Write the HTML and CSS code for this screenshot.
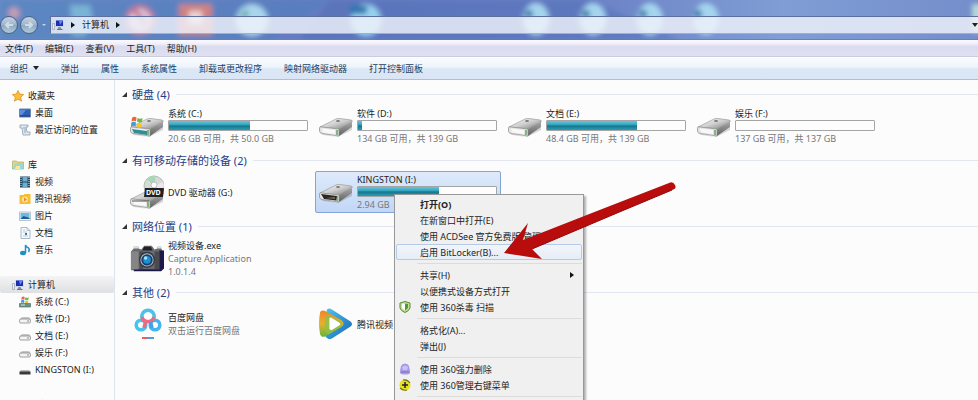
FILE: index.html
```html
<!DOCTYPE html>
<html lang="zh-CN">
<head>
  <meta charset="UTF-8">
  <title>计算机</title>
  <link rel="stylesheet" href="styles.css">
</head>
<body>
  <!-- shared icons -->
  <svg class="defs" width="0" height="0" aria-hidden="true">
    <defs>
      <linearGradient id="metal" x1="0" y1="0" x2="1" y2="1">
        <stop offset="0" stop-color="#fafafa"/><stop offset="0.5" stop-color="#cfcfcf"/><stop offset="1" stop-color="#777"/>
      </linearGradient>
      <linearGradient id="side" x1="0" y1="0" x2="0" y2="1">
        <stop offset="0" stop-color="#aaa"/><stop offset="1" stop-color="#5e605e"/>
      </linearGradient>
      <linearGradient id="blue" x1="0" y1="0" x2="1" y2="1">
        <stop offset="0" stop-color="#4bc6ee"/><stop offset="1" stop-color="#1763b4"/>
      </linearGradient>
      <linearGradient id="warm" x1="0" y1="0" x2="0" y2="1">
        <stop offset="0" stop-color="#ef842a"/><stop offset="0.5" stop-color="#e7b12e"/><stop offset="1" stop-color="#5fb63c"/>
      </linearGradient>
      <symbol id="drive" viewBox="0 0 34 19">
        <path d="M1 15 17 18.500 33 9v3L19 19 4 17z" fill="#000" opacity=".15"/>
        <path d="M1 9 17 1q2-1 4-.5l11 1.500q2 .5 1 2L20 11z" fill="url(#metal)" stroke="#909090" stroke-width=".6"/>
        <path d="M20 11 33 3.500v5.500L20 18z" fill="url(#side)"/>
        <path d="M1 8.800 20 11v7L3 15.500Q.5 15 .5 13V10z" fill="#e4e5e3" stroke="#8a8a8a" stroke-width=".7"/>
        <path d="M3 10.500 16 12v4L4 14.500z" fill="#f8f8f8"/>
        <path d="M18 12v5" stroke="#479043" stroke-width="1.200"/>
        <ellipse cx="19" cy="3" rx="2" ry=".8" fill="#555"/>
      </symbol>
      <symbol id="mini-drive" viewBox="0 0 12 12">
        <path d="M1 6Q2 4 4 4h5q2 0 2.500 2v3H.5z" fill="#c4c5c6"/>
        <rect x=".6" y="6" width="10.800" height="4" rx="1.200" fill="#f3f3f3" stroke="#888" stroke-width=".8"/>
        <path d="M8 8h2" stroke="#8b8b8b"/>
      </symbol>
      <symbol id="windows" viewBox="0 0 12 12">
        <path d="M1 2Q3 0 5.500 1.500L5 5.500Q3 4 .5 5.500z" fill="#e7693a"/>
        <path d="M6.500 2Q9 3.500 11.500 2L11 6Q8.500 7 6 5.500z" fill="#71b744"/>
        <path d="M.3 6.500Q3 5 5 6.500l-.5 4Q2 9 0 10.500z" fill="#429bdc"/>
        <path d="M6 7Q8.500 8 11 7l-.5 4Q8 12 5.500 11z" fill="#f5c52e"/>
      </symbol>
      <symbol id="computer" viewBox="0 0 12 12">
        <rect x="3.500" y="1" width="8" height="7" fill="#c8d4ec"/>
        <path d="M4 1.500h7v5.500H4z" fill="#1a2fae"/>
        <path d="M7 1.500h4L8 6z" fill="#6a88ef"/>
        <path d="M6.500 8h2l1 2h-4z" fill="#858da0"/>
        <path d="M5 10.500h5.500" stroke="#69758b"/>
        <path d="M.5 4.500h2v6h-2z" fill="#e9edf3" stroke="#99a3b5" stroke-width=".7"/>
      </symbol>
    </defs>
  </svg>

  <header class="glass">
    <svg class="wallpaper" width="978" height="40" aria-hidden="true">
      <defs>
        <filter id="soft"><feGaussianBlur stdDeviation="2.500"/></filter>
      </defs>
      <g filter="url(#soft)">
        <path d="M0 0h330l-60 40H0z" fill="#4c80bd" opacity=".45"/>
        <path d="M330 0h260l90 40H300z" fill="#4867b5" opacity=".4"/>
        <circle cx="14" cy="13" r="6" fill="#c59bb4"/>
        <path d="M70 5h20l4 18-10 13H72z" fill="#79b3d6"/>
        <circle cx="140" cy="20" r="13" fill="#d9c3d8" stroke="#c4779a" stroke-width="4"/>
        <path d="m134 10 12 14" stroke="#c4667f" stroke-width="4"/>
        <path d="M179 4h33v31h-33z" fill="#cf8283"/>
        <path d="M189 11h13v13h-13z" fill="#ead3d2"/>
        <ellipse cx="252" cy="20" rx="16" ry="16" fill="#a8d5ec"/>
        <path d="m238 16 10-7v8z" fill="#5ba3a2"/>
        <ellipse cx="366" cy="20" rx="15" ry="16" fill="#95d2ee"/>
        <path d="M350 6h18l-2 8h-16z" fill="#2e77af"/>
        <g fill="#a4d4ee">
          <ellipse cx="536" cy="19" rx="13" ry="16"/>
          <ellipse cx="593" cy="19" rx="13" ry="16"/>
          <ellipse cx="650" cy="19" rx="13" ry="16"/>
          <ellipse cx="706" cy="19" rx="13" ry="16"/>
        </g>
        <g fill="#397aa9">
          <circle cx="529" cy="14" r="4"/>
          <circle cx="586" cy="14" r="4"/>
          <circle cx="643" cy="14" r="4"/>
          <circle cx="698" cy="14" r="4"/>
        </g>
        <path d="M972 4h10v28h-10z" fill="#b5dad9"/>
      </g>
    </svg>
    <button class="nav-btn" aria-label="后退"><svg width="10" height="10" viewBox="0 0 10 10"><path d="M9 5H2m3-3L2 5l3 3" fill="none" stroke="#d0dcea" stroke-width="2"/></svg></button>
    <button class="nav-btn" aria-label="前进"><svg width="10" height="10" viewBox="0 0 10 10"><path d="M1 5h7M5 2l3 3-3 3" fill="none" stroke="#d0dcea" stroke-width="2"/></svg></button>
    <span class="nav-more"></span>
    <div class="address">
      <svg width="12" height="12"><use href="#computer"/></svg>
      <span class="tri-right"></span>
      <button class="crumb">计算机</button>
      <span class="tri-right"></span>
      <button class="address-drop" aria-label="历史"><span class="tri-down"></span></button>
    </div>
  </header>

  <nav class="menubar">
    <button>文件(F)</button>
    <button>编辑(E)</button>
    <button>查看(V)</button>
    <button>工具(T)</button>
    <button>帮助(H)</button>
  </nav>

  <div class="toolbar">
    <button>组织<span class="tri-down"></span></button>
    <button>弹出</button>
    <button>属性</button>
    <button>系统属性</button>
    <button>卸载或更改程序</button>
    <button>映射网络驱动器</button>
    <button>打开控制面板</button>
  </div>

  <div class="main">
    <aside class="sidebar">
      <div class="tree">
        <a href="#" class="root"><svg width="12" height="12" viewBox="0 0 12 12"><path d="m6 .5 1.700 3.600 4 .4-3 2.700.9 4L6 9.200l-3.600 2 .9-4-3-2.700 4-.4z" fill="#fbbd3a" stroke="#d98b1c" stroke-width=".7"/></svg>收藏夹</a>
        <a href="#"><svg width="12" height="12" viewBox="0 0 12 12"><path d="M.5 2h11v8H.5z" fill="#2c5fb5" stroke="#6d86ae"/><path d="M1 3h6L3 8H1z" fill="#598cdb"/><path d="M1 9h10" stroke="#163974"/></svg>桌面</a>
        <a href="#"><svg width="12" height="12" viewBox="0 0 12 12"><path d="M1 1h8v2H7l1 5h3v3H4L3 4H1z" fill="#dfe8ef" stroke="#8b9eae" stroke-width=".8"/><path d="M4 4h3M5 6h2M5 8h2" stroke="#86a9c5"/></svg>最近访问的位置</a>
      </div>
      <div class="tree">
        <a href="#" class="root"><svg width="12" height="12" viewBox="0 0 12 12"><path d="M.5 2h4l1 1h6v7H.5z" fill="#e7d77c" stroke="#a9aa68" stroke-width=".7"/><path d="M3 4h8v6H1z" fill="#9dd6d4"/><path d="M4 7h4v3H3z" fill="#f8e795"/></svg>库</a>
        <a href="#"><svg width="12" height="12" viewBox="0 0 12 12"><path d="M1 .5h10v11H1z" fill="#24475c"/><path d="M3.500 1h5v4.500h-5zM3.500 6.500h5V11h-5z" fill="#6caed0"/><path d="M2 1v10M10 1v10" stroke="#d9e8ee" stroke-dasharray="1 1"/></svg>视频</a>
        <a href="#"><svg width="12" height="12" viewBox="0 0 12 12"><path d="M.5 2h4l1-1h6v10H.5z" fill="#f8bc30"/><circle cx="6" cy="6.500" r="3" fill="#ffe19b"/><path d="m5 4.500 3 2-3 2z" fill="#ef8e23"/></svg>腾讯视频</a>
        <a href="#"><svg width="12" height="12" viewBox="0 0 12 12"><path d="M.5 2h11v8.500H.5z" fill="#f0f6f9" stroke="#a7b7c0" stroke-width=".8"/><path d="M1.500 3h9v6h-9z" fill="#6bbbe4"/><path d="m1.500 9 3-3 6 2v1z" fill="#205c90"/></svg>图片</a>
        <a href="#"><svg width="12" height="12" viewBox="0 0 12 12"><path d="M2 .5h6l3 3v8H2z" fill="#f5f9fb" stroke="#93a9b8" stroke-width=".8"/><path d="M8 .5v3h3M4 3h2M4 5h4M4 9h5" stroke="#9db3c2" fill="none" stroke-width=".7"/><path d="M6 6h2v2H6z" fill="#3274ae"/></svg>文档</a>
        <a href="#"><svg width="12" height="12" viewBox="0 0 12 12"><ellipse cx="4" cy="9" rx="3" ry="2.200" fill="#218fc6"/><path d="M6.500 9V1q.5 2 3 3 1.500 1.500 0 4" fill="none" stroke="#218fc6" stroke-width="1.500"/></svg>音乐</a>
      </div>
      <div class="tree">
        <a href="#" class="root current"><svg width="12" height="12"><use href="#computer"/></svg>计算机</a>
        <a href="#"><svg width="12" height="12" viewBox="0 0 12 12"><use href="#windows" x="2" width="8" height="8"/><path d="M.5 7.500h11V11H.5z" fill="#6b9288" stroke="#587368" stroke-width=".7"/><path d="M2 9h4" stroke="#cfe3e5"/></svg>系统 (C:)</a>
        <a href="#"><svg width="12" height="12"><use href="#mini-drive"/></svg>软件 (D:)</a>
        <a href="#"><svg width="12" height="12"><use href="#mini-drive"/></svg>文档 (E:)</a>
        <a href="#"><svg width="12" height="12"><use href="#mini-drive"/></svg>娱乐 (F:)</a>
        <a href="#"><svg width="12" height="12" viewBox="0 0 12 12"><path d="M2 6h8l1.500 2H.5z" fill="#b7b7b7"/><path d="M.5 7.500h11v3H.5z" fill="#393939"/></svg>KINGSTON (I:)</a>
      </div>
      <div class="tree">
        <a href="#" class="root"><svg width="12" height="12" viewBox="0 0 12 12"><circle cx="6" cy="6" r="5" fill="#51b1d7"/><path d="M2 4q4-3 8 0M4 2l2 4" stroke="#d4f1f7" fill="none"/></svg>网络</a>
      </div>
    </aside>

    <main class="content">
      <section class="group">
        <h2><span class="collapse"></span>硬盘 (4)</h2>
        <div class="tiles">
          <div class="tile">
            <svg width="34" height="26" viewBox="0 0 34 26"><use href="#drive" y="5" width="34" height="19"/><path d="m2 16 15 2v4L4 20z" fill="#2f8f96"/><use href="#windows" x="1" y="3" width="12" height="12"/></svg>
            <div class="info">
              <span class="name">系统 (C:)</span>
              <div class="bar"><div class="fill" style="width: 59%"></div></div>
              <span class="sub">20.6 GB 可用，共 50.0 GB</span>
            </div>
          </div>
          <div class="tile">
            <svg width="34" height="26" viewBox="0 0 34 26"><use href="#drive" y="5" width="34" height="19"/></svg>
            <div class="info">
              <span class="name">软件 (D:)</span>
              <div class="bar"><div class="fill" style="width: 3%"></div></div>
              <span class="sub">134 GB 可用，共 139 GB</span>
            </div>
          </div>
          <div class="tile">
            <svg width="34" height="26" viewBox="0 0 34 26"><use href="#drive" y="5" width="34" height="19"/></svg>
            <div class="info">
              <span class="name">文档 (E:)</span>
              <div class="bar"><div class="fill" style="width: 65%"></div></div>
              <span class="sub">48.4 GB 可用，共 139 GB</span>
            </div>
          </div>
          <div class="tile">
            <svg width="34" height="26" viewBox="0 0 34 26"><use href="#drive" y="5" width="34" height="19"/></svg>
            <div class="info">
              <span class="name">娱乐 (F:)</span>
              <div class="bar"><div class="fill" style="width: 0%"></div></div>
              <span class="sub">137 GB 可用，共 137 GB</span>
            </div>
          </div>
        </div>
      </section>

      <section class="group">
        <h2><span class="collapse"></span>有可移动存储的设备 (2)</h2>
        <div class="tiles">
          <div class="tile">
            <svg width="34" height="36" viewBox="0 0 34 36">
              <circle cx="24" cy="12" r="10" fill="#d4ddd5" stroke="#a9aaa9" stroke-width=".8"/>
              <path d="M24 12 17 5q4-4 9-3z" fill="#a9d8b6"/><path d="m24 12 9-4q2 5-1 9z" fill="#eee7f2"/>
              <circle cx="24" cy="11" r="3" fill="#fff" stroke="#aaa" stroke-width=".7"/>
              <use href="#drive" y="16" width="34" height="19"/>
              <path d="M2 27h17" stroke="#555"/>
              <path d="M15 14h18q1 0 1 1l-1 8H14z" fill="#222"/>
              <text class="disc-label" x="16" y="21">DVD</text>
            </svg>
            <div class="info"><span class="name">DVD 驱动器 (G:)</span></div>
          </div>
          <div class="tile selected">
            <svg width="34" height="26" viewBox="0 0 34 26"><use href="#drive" y="5" width="34" height="19"/><path d="m2 15 16 2-1 4.500L5 20z" fill="#292522"/><path d="m6 19 10-1v2z" fill="#75695c"/></svg>
            <div class="info">
              <span class="name">KINGSTON (I:)</span>
              <div class="bar"><div class="fill" style="width: 59%"></div></div>
              <span class="sub">2.94 GB</span>
            </div>
          </div>
        </div>
      </section>

      <section class="group">
        <h2><span class="collapse"></span>网络位置 (1)</h2>
        <div class="tiles">
          <div class="tile">
            <svg width="34" height="28" viewBox="0 0 36 28">
              <path d="M1 7 4 4V2h5v2l3 1 3-4h8l3 4 3-1V2h4v2l2 3v18l-2 2H1z" fill="#686b70"/>
              <path d="M31 6h5v19l-3 3H4v-2h27z" fill="#1e1848"/>
              <path d="M1 7h8v19H1z" fill="#858585"/><path d="M10 7h4v19h-4zM26 7h5v19h-5z" fill="#4a4b50"/>
              <path d="M15 2h7l2 4H13z" fill="#202126"/><path d="M4 3h5M29 3h4" stroke="#ddd" stroke-width="2"/>
              <circle cx="18" cy="16" r="8.500" fill="#34363c"/><circle cx="18" cy="16" r="7" fill="#b7bdc6"/>
              <circle cx="18" cy="16" r="6" fill="#173f71"/><circle cx="18" cy="16" r="4" fill="#1b91d3"/>
              <circle cx="16.500" cy="14" r="1.800" fill="#a6e5f5"/>
            </svg>
            <div class="info">
              <span class="name">视频设备.exe</span>
              <span class="sub">Capture Application</span>
              <span class="sub">1.0.1.4</span>
            </div>
          </div>
        </div>
      </section>

      <section class="group">
        <h2><span class="collapse"></span>其他 (2)</h2>
        <div class="tiles">
          <div class="tile">
            <svg width="34" height="32" viewBox="0 0 34 32">
              <g fill="none" stroke-width="3.500">
                <path d="M12 10a6.200 6.200 0 1 1 12 0" stroke="#4ec0ec"/>
                <circle cx="11" cy="17" r="4.800" stroke="#46c3ee"/>
                <circle cx="25" cy="17" r="4.800" stroke="#46b4ee"/>
                <path d="M12 9a6.200 6.200 0 0 0 12 0" stroke="#ee6a80"/>
                <path d="m15.500 14-1.500 6" stroke="#ee6a80"/>
                <path d="m20.500 14 1.500 6" stroke="#46a0e4"/>
              </g>
              <path d="M12 30h6" stroke="#ee5b63" stroke-width="2"/><path d="M18 30h6" stroke="#4a9edc" stroke-width="2"/>
            </svg>
            <div class="info">
              <span class="name">百度网盘</span>
              <span class="sub">双击运行百度网盘</span>
            </div>
          </div>
          <div class="tile">
            <svg width="34" height="34" viewBox="0 0 36 34">
              <path d="M8 3Q9-1 14 2l19 12q4 3 0 6L14 32q-5 3-7-2z" fill="url(#blue)"/>
              <path d="M1 6q0-4 5-3l18 10q4 4 0 7L7 30q-5 2-6-3Q-1 16 1 6z" fill="url(#warm)"/>
              <path d="M7 9q1-3 4-1l13 7q2 2 0 4l-13 8q-3 1-4-2Q5 17 7 9z" fill="#8fc04a" opacity=".8"/>
              <path d="M11 11q1-2 3 0l8 5q1 1 0 2l-8 5q-2 1-3-1z" fill="#fff"/>
            </svg>
            <div class="info"><span class="name">腾讯视频</span></div>
          </div>
        </div>
      </section>
    </main>
  </div>

  <div class="context-menu" role="menu">
    <button role="menuitem" class="default">打开(O)</button>
    <button role="menuitem">在新窗口中打开(E)</button>
    <button role="menuitem">使用 ACDSee 官方免费版 管理</button>
    <button role="menuitem" class="hover">启用 BitLocker(B)...</button>
    <hr>
    <button role="menuitem">共享(H)<span class="tri-right"></span></button>
    <button role="menuitem">以便携式设备方式打开</button>
    <button role="menuitem"><svg width="12" height="12" viewBox="0 0 12 12"><path d="M6 .5 11 2v5q-1 3-5 4.500Q2 10 1 7V2z" fill="#c8df9a" stroke="#568a30"/><path d="M6 2.500v7Q3.500 8 3 6.500V3z" fill="#fff"/><path d="M6 2.500 9 3v3.500Q8.500 8 6 9.500z" fill="#4d9c31"/></svg>使用 360杀毒 扫描</button>
    <hr>
    <button role="menuitem">格式化(A)...</button>
    <button role="menuitem">弹出(J)</button>
    <hr>
    <button role="menuitem"><svg width="12" height="12" viewBox="0 0 12 12"><path d="M1 8 2 3q1-2.500 4-2.500T10 3l1 5v2q-1 1.500-5 1.500T1 10z" fill="#a69be4"/><path d="M3 4q3-3 6 0L8 7H4z" fill="#c9c3f5"/><path d="M2 9h8" stroke="#796bc6"/></svg>使用 360强力删除</button>
    <button role="menuitem"><svg width="12" height="12" viewBox="0 0 12 12"><circle cx="6" cy="6" r="5.500" fill="#e7df24"/><path d="M1 9Q4 12 8 11M4 1q4-1 7 3" fill="none" stroke="#6d7418" stroke-width="1.200"/><path d="M6 3v6M3 6h6" stroke="#222" stroke-width="1.500"/></svg>使用 360管理右键菜单</button>
    <hr>
  </div>

  <svg class="pointer" width="180" height="90" viewBox="0 0 180 90" aria-hidden="true">
    <path d="M4 73 28 43 23 60 97 31 169 3Q173 1 175 5T172 10L117 33 32 69 42 79z" fill="#b90d0d"/>
    <path d="M32 69 117 33 172 10" fill="none" stroke="#8d0808"/>
  </svg>
</body>
</html>
```
FILE: styles.css
```css
* {
  box-sizing: border-box;
}

body {
  margin: 0;
  height: 100vh;
  overflow: hidden;
  display: flex;
  flex-direction: column;
  position: relative;
  background: #fcfcfd;
  color: #222;
  font-family: "Noto Sans", "Noto Sans CJK SC", sans-serif;
  font-size: 9px;
  line-height: 13px;
}

button {
  margin: 0;
  padding: 0;
  border: none;
  background: none;
  color: inherit;
  font: inherit;
  white-space: nowrap;
}

svg {
  flex: none;
}

.defs {
  position: absolute;
}

/* small triangles */
.tri-right {
  border: 3px solid transparent;
  border-left: 4px solid #111;
  border-right: none;
}

.tri-down {
  border: 3px solid transparent;
  border-top: 4px solid #222;
  border-bottom: none;
}

/* window frame */
.glass {
  position: relative;
  flex: none;
  display: flex;
  align-items: center;
  height: 40px;
  padding-top: 10px;
  background: linear-gradient(90deg, #6a8dc5, #657cc1 30%, #6b82c5 60%, #809dd5 80%, #748ecb);
  border-bottom: 1px solid #6d80b5;
}

.wallpaper {
  position: absolute;
  left: 0;
  top: 0;
}

.nav-btn {
  position: relative;
  display: flex;
  align-items: center;
  justify-content: center;
  width: 18px;
  height: 18px;
  margin-right: 2px;
  border: 1px solid #4b6288;
  border-radius: 50%;
  background: linear-gradient(#c3d2e4, #9fb4cc 50%, #8fa8c3 52%, #b0ccd9);
}

.nav-more {
  position: relative;
  margin: 0 4px 0 2px;
  border: 2px solid transparent;
  border-top: 2px solid #c6d5ec;
  border-bottom: none;
}

.address {
  position: relative;
  flex: 1;
  display: flex;
  align-items: center;
  gap: 7px;
  height: 18px;
  padding-left: 1px;
  background: rgba(240, 243, 250, 0.82);
  border: 1px solid #5d6f9c;
  border-right: none;
  border-bottom-color: #a2aecf;
}

.address-drop {
  display: flex;
  margin-left: auto;
}

.menubar {
  flex: none;
  display: flex;
  gap: 12px;
  height: 17px;
  padding-left: 5px;
  background: linear-gradient(#fbfaff, #f1edf9 25%, #dadcef 40%, #dfe0f1);
  border-bottom: 1px solid #c9cddd;
}

.toolbar {
  flex: none;
  display: flex;
  gap: 22px;
  height: 23px;
  padding-left: 10px;
  color: #26405f;
  background: linear-gradient(#fbfdff, #eef4fc 45%, #dce7f5 55%, #dae6f5);
  border-bottom: 1px solid #b5bdd0;
}

.toolbar button {
  display: flex;
  align-items: center;
  gap: 5px;
}

.main {
  flex: 1;
  display: flex;
  min-height: 0;
}

/* navigation tree */
.sidebar {
  flex: none;
  width: 115px;
  padding-top: 7px;
  overflow: hidden;
  border-right: 1px solid #dde4f0;
}

.tree {
  margin-bottom: 18px;
}

.tree a {
  display: flex;
  align-items: center;
  gap: 4px;
  height: 17px;
  padding-left: 19px;
  color: #222;
  text-decoration: none;
  white-space: nowrap;
}

.tree .root {
  padding-left: 12px;
}

.tree .current {
  background: linear-gradient(#f4f4f5, #dfe0e2);
  border-radius: 2px;
}

/* drives */
.content {
  flex: 1;
  min-width: 0;
  padding: 3px 0 0 7px;
  overflow: hidden;
}

.group {
  margin-bottom: 2px;
}

.group h2 {
  display: flex;
  align-items: center;
  margin: 0;
  height: 22px;
  color: #273c88;
  font-size: 11px;
  font-weight: normal;
}

.group h2::after {
  content: "";
  flex: 1;
  height: 1px;
  margin-left: 6px;
  background: #e1e6f0;
}

.collapse {
  margin-right: 5px;
  border-left: 5px solid transparent;
  border-bottom: 5px solid #333;
}

.tiles {
  display: flex;
  gap: 3px;
  padding-left: 4px;
}

.tile {
  flex: none;
  display: flex;
  align-items: center;
  width: 186px;
  height: 42px;
  padding: 0 3px;
  border: 1px solid transparent;
  border-radius: 2px;
}

.tile > svg {
  margin-right: 4px;
}

.selected {
  background: linear-gradient(#dfeafb, #c1d7f6);
  border-color: #83a5d5;
}

.info {
  flex: 1;
  display: flex;
  flex-direction: column;
  white-space: nowrap;
}

.sub {
  color: #777;
}

.bar {
  width: 140px;
  height: 11px;
  margin-bottom: 1px;
  background: #fdfdfd;
  border: 1px solid #a5a5a5;
  border-radius: 1px;
}

.fill {
  height: 100%;
  background: linear-gradient(#69c5d8, #35a6c0 40%, #14768e 55%, #2a9fb4);
}

.disc-label {
  fill: #fff;
  font-size: 7px;
  font-weight: bold;
}

/* popup */
.context-menu {
  position: absolute;
  left: 394px;
  top: 194px;
  width: 190px;
  padding: 1px;
  background: #f0f0f0;
  border: 1px solid #989898;
  box-shadow: 2px 2px 2px rgba(0, 0, 0, 0.3);
}

.context-menu button {
  position: relative;
  display: flex;
  align-items: center;
  width: 100%;
  height: 16px;
  padding: 0 7px 0 23px;
  border: 1px solid transparent;
  border-radius: 2px;
}

.context-menu button svg {
  position: absolute;
  left: 2px;
}

.context-menu .tri-right {
  margin-left: auto;
}

.context-menu .default {
  font-weight: bold;
}

.context-menu .hover {
  background: linear-gradient(#f2f5fa, #e6edf7);
  border-color: #b4cbe8;
}

.context-menu hr {
  height: 1px;
  margin: 3px 0 3px 21px;
  border: none;
  background: #dcdcdc;
}

.pointer {
  position: absolute;
  left: 500px;
  top: 180px;
}
```
